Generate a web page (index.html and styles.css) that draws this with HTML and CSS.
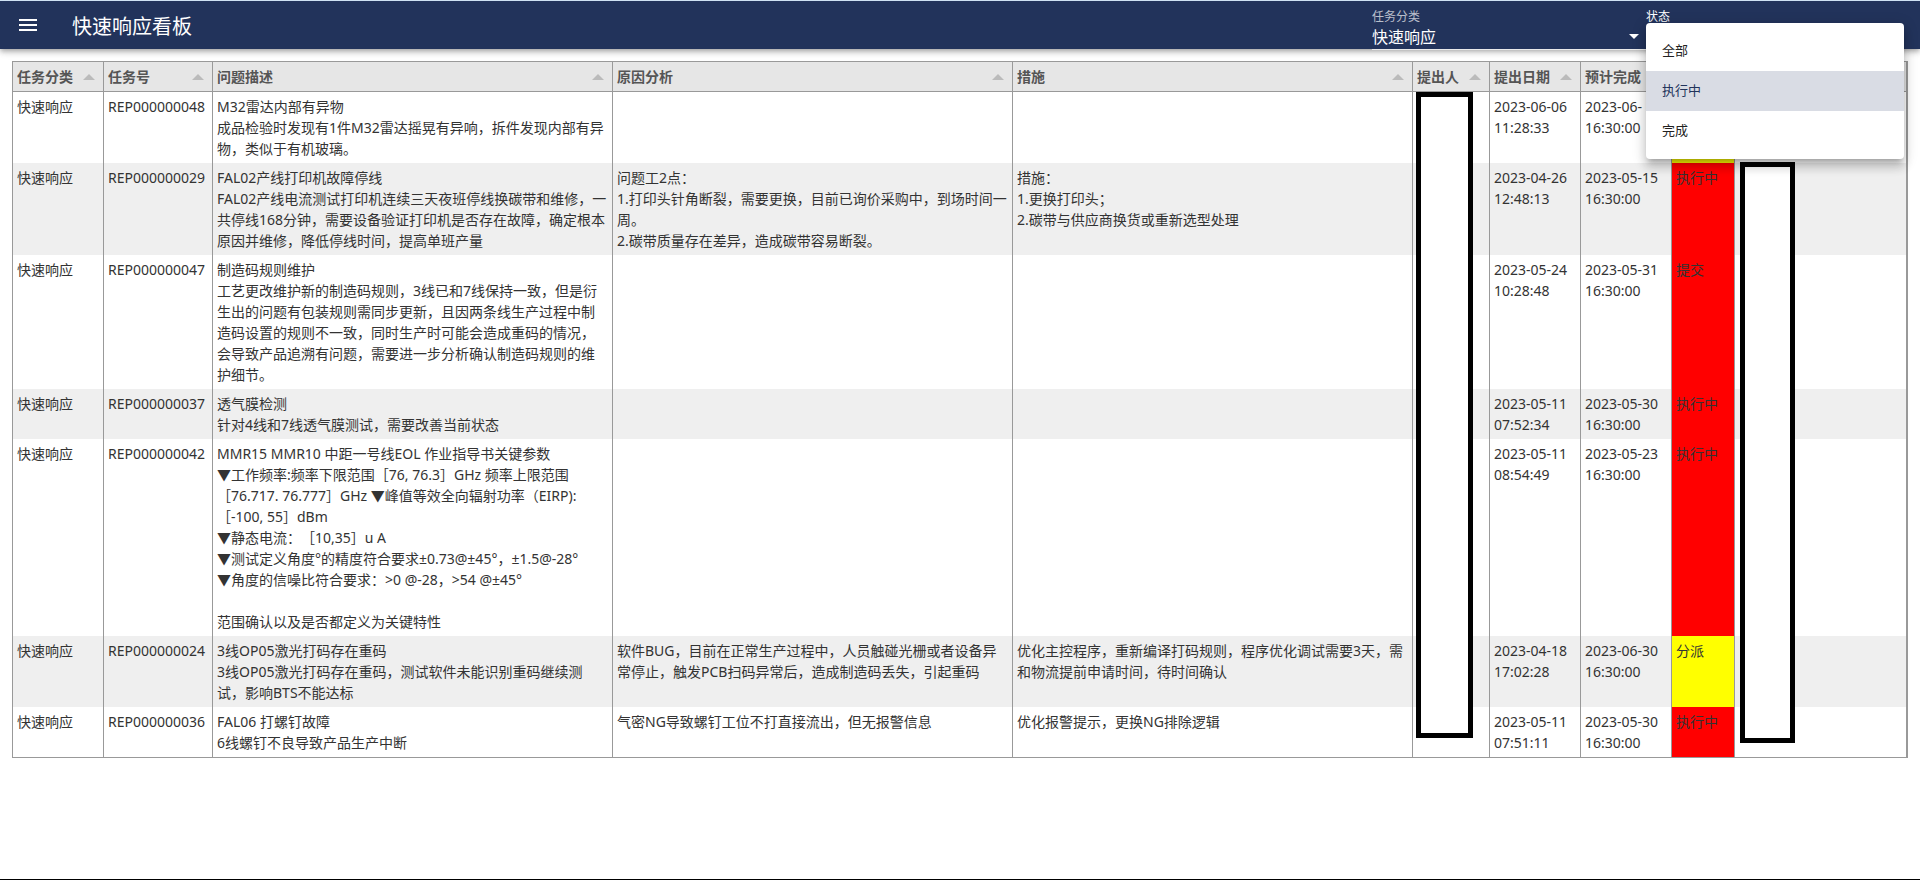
FILE: index.html
```html
<!DOCTYPE html>
<html lang="zh-CN">
<head>
<meta charset="utf-8">
<title>快速响应看板</title>
<link rel="stylesheet" href="styles.css">
</head>
<body>
<header class="appbar">
  <button class="menu-button" type="button" aria-label="菜单">
    <svg viewBox="0 0 24 24" width="24" height="24"><path d="M3 18h18v-2H3v2zm0-5h18v-2H3v2zm0-7v2h18V6H3z"/></svg>
  </button>
  <h1 class="title">快速响应看板</h1>
  <div class="field">
    <label class="field-label" for="category">任务分类</label>
    <div class="field-control">
      <select class="field-select" id="category"><option>快速响应</option></select>
      <svg class="field-arrow" viewBox="0 0 24 24" width="24" height="24"><path d="M7 10l5 5 5-5z"/></svg>
    </div>
  </div>
  <div class="field">
    <span class="field-label field-label-active" id="state-label">状态</span>
    <div class="dropdown" role="listbox" aria-labelledby="state-label">
      <button class="option" type="button" role="option">全部</button>
      <button class="option option-selected" type="button" role="option" aria-selected="true">执行中</button>
      <button class="option" type="button" role="option">完成</button>
    </div>
  </div>
</header>
<main class="board">
  <table class="grid">
    <colgroup>
      <col class="c-category"><col class="c-number"><col class="c-text"><col class="c-text"><col class="c-text">
      <col class="c-person"><col class="c-date"><col class="c-date"><col class="c-state"><col>
    </colgroup>
    <thead>
      <tr>
        <th><div class="head">任务分类<i class="sort"></i></div></th>
        <th><div class="head">任务号<i class="sort"></i></div></th>
        <th><div class="head">问题描述<i class="sort"></i></div></th>
        <th><div class="head">原因分析<i class="sort"></i></div></th>
        <th><div class="head">措施<i class="sort"></i></div></th>
        <th><div class="head">提出人<i class="sort"></i></div></th>
        <th><div class="head">提出日期<i class="sort"></i></div></th>
        <th><div class="head">预计完成<i class="sort"></i></div></th>
        <th></th>
        <th></th>
      </tr>
    </thead>
    <tbody>
      <tr>
        <td>快速响应</td><td>REP000000048</td>
        <td>M32雷达内部有异物<br>成品检验时发现有1件M32雷达摇晃有异响，拆件发现内部有异物，类似于有机玻璃。</td>
        <td></td><td></td><td></td>
        <td>2023-06-06<br>11:28:33</td><td>2023-06-<br>16:30:00</td><td class="warn"></td><td></td>
      </tr>
      <tr>
        <td>快速响应</td><td>REP000000029</td>
        <td>FAL02产线打印机故障停线<br>FAL02产线电流测试打印机连续三天夜班停线换碳带和维修，一共停线168分钟，需要设备验证打印机是否存在故障，确定根本原因并维修，降低停线时间，提高单班产量</td>
        <td>问题工2点：<br>1.打印头针角断裂，需要更换，目前已询价采购中，到场时间一周。<br>2.碳带质量存在差异，造成碳带容易断裂。</td>
        <td>措施：<br>1.更换打印头；<br>2.碳带与供应商换货或重新选型处理</td><td></td>
        <td>2023-04-26<br>12:48:13</td><td>2023-05-15<br>16:30:00</td><td class="late">执行中</td><td></td>
      </tr>
      <tr>
        <td>快速响应</td><td>REP000000047</td>
        <td>制造码规则维护<br>工艺更改维护新的制造码规则，3线已和7线保持一致，但是衍生出的问题有包装规则需同步更新，且因两条线生产过程中制造码设置的规则不一致，同时生产时可能会造成重码的情况，会导致产品追溯有问题，需要进一步分析确认制造码规则的维护细节。</td>
        <td></td><td></td><td></td>
        <td>2023-05-24<br>10:28:48</td><td>2023-05-31<br>16:30:00</td><td class="late">提交</td><td></td>
      </tr>
      <tr>
        <td>快速响应</td><td>REP000000037</td>
        <td>透气膜检测<br>针对4线和7线透气膜测试，需要改善当前状态</td>
        <td></td><td></td><td></td>
        <td>2023-05-11<br>07:52:34</td><td>2023-05-30<br>16:30:00</td><td class="late">执行中</td><td></td>
      </tr>
      <tr>
        <td>快速响应</td><td>REP000000042</td>
        <td>MMR15 MMR10 中距一号线EOL 作业指导书关键参数<br>▼工作频率:频率下限范围［76, 76.3］GHz 频率上限范围<br>［76.717. 76.777］GHz ▼峰值等效全向辐射功率（EIRP):<br>［-100, 55］dBm<br>▼静态电流：［10,35］u A<br>▼测试定义角度°的精度符合要求±0.73@±45°，±1.5@-28°<br>▼角度的信噪比符合要求：&gt;0 @-28，&gt;54 @±45°<br><br>范围确认以及是否都定义为关键特性</td>
        <td></td><td></td><td></td>
        <td>2023-05-11<br>08:54:49</td><td>2023-05-23<br>16:30:00</td><td class="late">执行中</td><td></td>
      </tr>
      <tr>
        <td>快速响应</td><td>REP000000024</td>
        <td>3线OP05激光打码存在重码<br>3线OP05激光打码存在重码，测试软件未能识别重码继续测试，影响BTS不能达标</td>
        <td>软件BUG，目前在正常生产过程中，人员触碰光栅或者设备异常停止，触发PCB扫码异常后，造成制造码丢失，引起重码</td>
        <td>优化主控程序，重新编译打码规则，程序优化调试需要3天，需和物流提前申请时间，待时间确认</td><td></td>
        <td>2023-04-18<br>17:02:28</td><td>2023-06-30<br>16:30:00</td><td class="warn">分派</td><td></td>
      </tr>
      <tr>
        <td>快速响应</td><td>REP000000036</td>
        <td>FAL06 打螺钉故障<br>6线螺钉不良导致产品生产中断</td>
        <td>气密NG导致螺钉工位不打直接流出，但无报警信息</td>
        <td>优化报警提示，更换NG排除逻辑</td><td></td>
        <td>2023-05-11<br>07:51:11</td><td>2023-05-30<br>16:30:00</td><td class="late">执行中</td><td></td>
      </tr>
    </tbody>
  </table>
  <div class="mask mask-person"></div>
  <div class="mask mask-owner"></div>
</main>
</body>
</html>
```
FILE: styles.css
```css
* { box-sizing: border-box; }

body {
  margin: 0;
  min-height: 100vh;
  display: flex;
  flex-direction: column;
  background: #fff;
  border-bottom: 1px solid #000;
  color: #333;
  font: 14px/21px "Noto Sans", "Noto Sans CJK SC", sans-serif;
  text-spacing-trim: space-all;
}

.appbar {
  position: relative;
  z-index: 2;
  display: flex;
  height: 49px;
  padding-left: 16px;
  border-top: 1px solid #cfe2f3;
  background: #22335b;
  color: #fff;
  box-shadow: 0 2px 4px -1px rgba(0, 0, 0, .2), 0 4px 5px rgba(0, 0, 0, .14), 0 1px 10px rgba(0, 0, 0, .12);
}

.menu-button {
  align-self: center;
  width: 24px;
  height: 24px;
  padding: 0;
  border: 0;
  background: none;
}

.menu-button svg { display: block; fill: #fff; }

.title {
  flex: 1;
  align-self: center;
  margin: 0 0 0 32px;
  padding-top: 3px;
  font-size: 20px;
  line-height: 28px;
  font-weight: 400;
}

.field {
  position: relative;
  width: 274px;
  padding-top: 9px;
  display: flex;
  flex-direction: column;
}

.field-label {
  font-size: 12px;
  line-height: 14px;
  color: rgba(255, 255, 255, .7);
}

.field-label-active { color: #fff; }

.field-control {
  flex: 1;
  display: flex;
  position: relative;
  border-bottom: 1px solid rgba(255, 255, 255, .7);
  margin-bottom: -1px;
}

.field-select {
  flex: 1;
  appearance: none;
  padding: 0;
  border: 0;
  background: none;
  color: #fff;
  font: 16px/24px "Noto Sans", "Noto Sans CJK SC", sans-serif;
}

.field-arrow {
  position: absolute;
  right: 0;
  top: 0;
  fill: #fff;
  pointer-events: none;
}

.dropdown {
  position: absolute;
  top: 22px;
  left: 0;
  right: 16px;
  padding: 8px 0;
  border-radius: 4px;
  background: #fff;
  box-shadow: 0 5px 5px -3px rgba(0, 0, 0, .2), 0 8px 10px 1px rgba(0, 0, 0, .14), 0 3px 14px 2px rgba(0, 0, 0, .12);
}

.option {
  display: block;
  width: 100%;
  height: 40px;
  padding: 0 16px 2px;
  border: 0;
  background: none;
  color: #222;
  text-align: left;
  font: 13px/20px "Noto Sans", "Noto Sans CJK SC", sans-serif;
}

.option-selected { background: #d9dce4; color: #22335b; }

.board { position: relative; padding: 12px; }

.grid {
  width: 100%;
  table-layout: fixed;
  border: 1px solid #999;
  border-collapse: separate;
  border-spacing: 0;
}

.c-category, .c-date { width: 91px; }
.c-number { width: 109px; }
.c-text { width: 400px; }
.c-person { width: 77px; }
.c-state { width: 63px; }

th {
  padding: 4px;
  border-right: 1px solid #999;
  border-bottom: 1px solid #999;
  background: #e6e6e6;
  color: #555;
  font-weight: 700;
  text-align: left;
}

.head {
  display: flex;
  align-items: center;
  justify-content: space-between;
  padding-right: 4px;
  white-space: nowrap;
}

.sort {
  border-left: 6px solid transparent;
  border-right: 6px solid transparent;
  border-bottom: 6px solid #bbb;
}

td {
  height: 29px;
  padding: 4px;
  border-right: 1px solid #999;
  vertical-align: top;
}

tbody tr:nth-child(even) { background: #efefef; }

.late { background: #f00; }
.warn { background: #ff0; }

.mask {
  position: absolute;
  border: 5px solid #000;
  background: #fff;
}

.mask-person { left: 1416px; top: 43px; width: 57px; height: 646px; }
.mask-owner { left: 1740px; top: 113px; width: 55px; height: 581px; }
```
